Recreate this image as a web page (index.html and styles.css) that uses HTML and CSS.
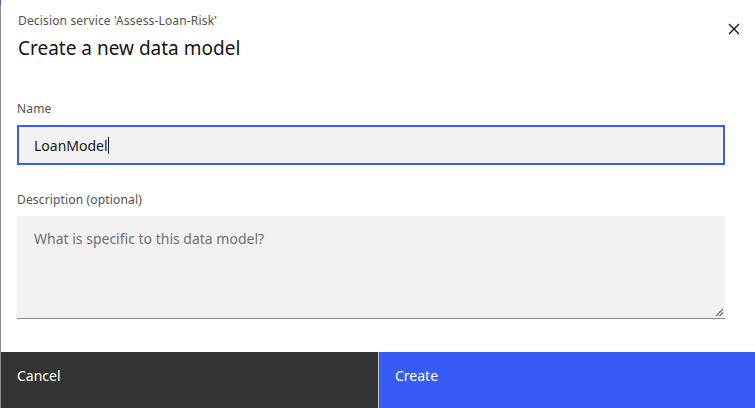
FILE: index.html
```html
<!DOCTYPE html>
<html>
<head>
<meta charset="utf-8">
<link rel="stylesheet" href="styles.css">
</head>
<body>
<div class="modal">
  <div class="edge"></div>
  <div class="content">
    <header class="head">
      <div class="titles">
        <p class="label">Decision service 'Assess-Loan-Risk'</p>
        <h1 class="heading">Create a new data model</h1>
      </div>
      <button class="close" aria-label="Close">
        <svg width="12" height="12" viewBox="0 0 12 12"><path d="M1 1 L11 11 M11 1 L1 11" stroke="#161616" stroke-width="1.4"/></svg>
      </button>
    </header>
    <div class="form">
      <div class="field">
        <label class="flabel">Name</label>
        <div class="input"><span class="val">LoanModel</span><span class="caret"></span></div>
      </div>
      <div class="field">
        <label class="flabel">Description (optional)</label>
        <div class="textarea">
          <span class="placeholder">What is specific to this data model?</span>
          <svg class="grip" width="9" height="9" viewBox="0 0 9 9"><path d="M8 1 L1 8 M8 4.5 L4.5 8" stroke="#6f6f6f" stroke-width="1.2"/></svg>
        </div>
      </div>
    </div>
    <footer class="foot">
      <button class="btn cancel">Cancel</button>
      <button class="btn create">Create</button>
    </footer>
  </div>
</div>
</body>
</html>
```
FILE: styles.css
```css
* { box-sizing: border-box; }
html, body { margin: 0; padding: 0; }
body {
  width: 755px;
  height: 408px;
  overflow: hidden;
  background: #fff;
  font-family: "Noto Sans", "Open Sans", sans-serif;
  color: #161616;
}
.modal {
  display: flex;
  height: 408px;
}
.edge {
  width: 1px;
  background: linear-gradient(#3a5bd0 0 5px, #8d8d8d 5px);
  flex: none;
}
.content {
  flex: 1;
  display: flex;
  flex-direction: column;
}
.head {
  display: flex;
  justify-content: space-between;
  padding: 13px 0 0 17px;
  height: 101px;
}
.label {
  margin: 0;
  font-size: 12px;
  line-height: 16px;
  letter-spacing: 0.16px;
  color: #525252;
}
.heading {
  margin: 6px 0 0;
  font-size: 19px;
  font-weight: 400;
  line-height: 26px;
  color: #161616;
}
.close {
  border: 0;
  background: none;
  padding: 0;
  width: 40px;
  height: 40px;
  margin-top: -4px;
  margin-right: 1px;
  display: flex;
  align-items: center;
  justify-content: center;
}
.form {
  padding: 0 30px 0 16px;
  display: flex;
  flex-direction: column;
  gap: 27px;
}
.field {
  display: flex;
  flex-direction: column;
}
.flabel {
  font-size: 12px;
  line-height: 16px;
  letter-spacing: 0.16px;
  color: #525252;
  margin-bottom: 8px;
}
.input {
  height: 40px;
  background: #f2f2f2;
  border: 2px solid #3a5cf6;
  display: flex;
  align-items: center;
  padding-left: 15px;
  font-size: 14px;
}
.val { color: #161616; }
.caret {
  width: 1px;
  height: 17px;
  background: #161616;
}
.textarea {
  position: relative;
  height: 103px;
  background: #f2f2f2;
  border-bottom: 1px solid #8d8d8d;
  padding: 13px 0 0 17px;
  font-size: 14px;
  line-height: 20px;
}
.placeholder { color: #6f6f6f; }
.grip {
  position: absolute;
  right: 1px;
  bottom: 1px;
}
.foot {
  margin-top: auto;
  display: flex;
  height: 56px;
}
.btn {
  border: 0;
  font-family: inherit;
  font-size: 14px;
  color: #fff;
  text-align: left;
  padding: 0 0 9px 16px;
  margin: 0;
}
.cancel {
  width: 378px;
  background: #333333;
  border-right: 1px solid #c6c6c6;
}
.create {
  flex: 1;
  background: #385bf8;
}
```
